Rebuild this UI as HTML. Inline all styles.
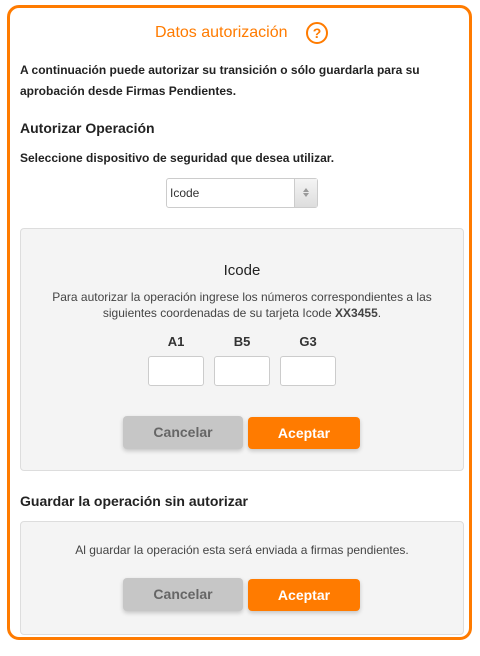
<!DOCTYPE html>
<html><head><meta charset="utf-8"><style>
body{margin:0;width:480px;height:656px;background:#fff;font-family:"Liberation Sans",sans-serif;color:#333;position:relative;overflow:hidden}
.a{position:absolute}
.outer{left:7px;top:5px;width:459px;height:629px;border:3px solid #ff7b00;border-radius:12px}
.title{left:155px;top:24px;font-size:16px;color:#ff7b00}
.q{left:306px;top:22px;width:18px;height:18px;border:2.5px solid #ff7b00;border-radius:50%;color:#ff7b00;font-weight:bold;font-size:14px;text-align:center;line-height:18px}
.t{font-size:12px;font-weight:bold;color:#222}
.h{font-size:14px;font-weight:bold;color:#222}
.sel{left:166px;top:178px;width:150px;height:28px;border:1px solid #ccc;border-radius:3px;background:#fff}
.sel span{position:absolute;left:3px;top:7px;font-size:12px}
.sel i{position:absolute;right:0;top:0;width:22px;height:28px;background:linear-gradient(#f4f4f4,#ddd);border-left:1px solid #ccc}
.box{left:20px;width:442px;background:#f4f4f4;border:1px solid #ddd;border-radius:4px}
.lab{font-size:13px;font-weight:bold;color:#333;width:56px;text-align:center}
.in{width:54px;height:28px;background:#fff;border:1px solid #ccc;border-radius:3px}
.bc{left:123px;width:120px;height:33px;background:#c6c6c6;border-radius:4px;box-shadow:0 2px 4px rgba(0,0,0,.2);font-size:14px;font-weight:bold;color:#666;text-align:center;line-height:33px}
.ba{left:248px;width:112px;height:32px;background:#ff7b00;border-radius:4px;box-shadow:0 2px 4px rgba(0,0,0,.2);font-size:14px;font-weight:bold;color:#fff;text-align:center;line-height:32px}
.s{font-size:12px;color:#444;text-align:center;left:20px;width:444px;line-height:16px}
</style></head><body>
<div class="a outer"></div>
<div class="a title">Datos autorización</div>
<div class="a q">?</div>
<div class="a t" style="left:20px;top:60px;line-height:21px">A continuación puede autorizar su transición o sólo guardarla para su<br>aprobación desde Firmas Pendientes.</div>
<div class="a h" style="left:20px;top:120px">Autorizar Operación</div>
<div class="a t" style="left:20px;top:151px">Seleccione dispositivo de seguridad que desea utilizar.</div>
<div class="a sel"><span>Icode</span><i><svg width="22" height="28"><path d="M11 10l-3 4h6z M11 19l-3-4h6z" fill="#999" transform="translate(0,-1)"/></svg></i></div>
<div class="a box" style="top:228px;height:241px"></div>
<div class="a" style="left:20px;width:444px;text-align:center;top:262px;font-size:15px;color:#222">Icode</div>
<div class="a s" style="top:289px">Para autorizar la operación ingrese los números correspondientes a las<br>siguientes coordenadas de su tarjeta Icode <b>XX3455</b>.</div>
<div class="a lab" style="left:148px;top:334px">A1</div>
<div class="a lab" style="left:214px;top:334px">B5</div>
<div class="a lab" style="left:280px;top:334px">G3</div>
<div class="a in" style="left:148px;top:356px"></div>
<div class="a in" style="left:214px;top:356px"></div>
<div class="a in" style="left:280px;top:356px"></div>
<div class="a bc" style="top:416px">Cancelar</div>
<div class="a ba" style="top:417px">Aceptar</div>
<div class="a h" style="left:20px;top:493px">Guardar la operación sin autorizar</div>
<div class="a box" style="top:521px;height:112px"></div>
<div class="a s" style="top:542px">Al guardar la operación esta será enviada a firmas pendientes.</div>
<div class="a bc" style="top:578px">Cancelar</div>
<div class="a ba" style="top:579px">Aceptar</div>
</body></html>
